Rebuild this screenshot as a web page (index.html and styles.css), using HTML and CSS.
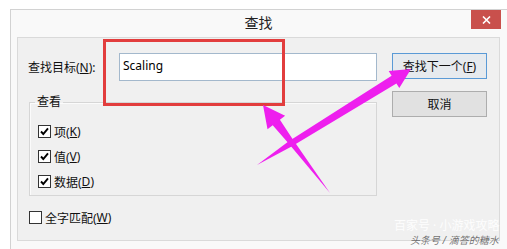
FILE: index.html
```html
<!DOCTYPE html>
<html lang="zh">
<head>
<meta charset="utf-8">
<title>查找</title>
<link rel="stylesheet" href="styles.css">
</head>
<body>
<div class="window">
  <div class="titlebar">
    <span></span>
    <span class="title">查找</span>
    <div class="close"><svg width="9" height="8" viewBox="0 0 9 8"><path d="M1 0.5 L8 7.5 M8 0.5 L1 7.5" stroke="#fff" stroke-width="1.6" fill="none"/></svg></div>
  </div>
  <div class="panel">
    <div class="main">
      <div class="find-row">
        <span class="find-label">查找目标(<u>N</u>):</span>
        <div class="input">Scaling</div>
      </div>
      <fieldset class="look">
        <legend>查看</legend>
        <div class="checks">
          <div class="check"><span class="box"><svg width="11" height="11" viewBox="0 0 11 11"><path d="M2 5.5 L4.3 8 L9 2.3" stroke="#000" stroke-width="1.9" fill="none"/></svg></span>项(<u>K</u>)</div>
          <div class="check"><span class="box"><svg width="11" height="11" viewBox="0 0 11 11"><path d="M2 5.5 L4.3 8 L9 2.3" stroke="#000" stroke-width="1.9" fill="none"/></svg></span>值(<u>V</u>)</div>
          <div class="check"><span class="box"><svg width="11" height="11" viewBox="0 0 11 11"><path d="M2 5.5 L4.3 8 L9 2.3" stroke="#000" stroke-width="1.9" fill="none"/></svg></span>数据(<u>D</u>)</div>
        </div>
      </fieldset>
      <div class="check whole"><span class="box"></span>全字匹配(<u>W</u>)</div>
    </div>
    <div class="buttons">
      <div class="btn default">查找下一个(<u>F</u>)</div>
      <div class="btn">取消</div>
    </div>
  </div>
</div>
<div class="highlight"></div>
<svg class="arrows" width="507" height="249" viewBox="0 0 507 249">
  <polygon fill="#ee1fee" points="257,165 291.6,146.5 396.4,83.4 399.3,88.1 411,69 388.7,71.1 391.6,75.8 288.4,141.5"/>
  <polygon fill="#ee1fee" points="330,193 292.4,138.7 279.9,119.8 285.1,115.8 263,105 267.5,129.2 272.7,125.2 287.6,142.3"/>
</svg>
<div class="wm-faint">百家号 · 小游戏攻略</div>
<div class="watermark">头条号 / 滴答的糖水</div>
</body>
</html>
```
FILE: styles.css
```css
html, body {
  margin: 0;
  padding: 0;
}
body {
  position: relative;
  width: 507px;
  height: 249px;
  overflow: hidden;
  background: #ffffff;
  font-family: "Noto Sans", "Noto Sans CJK SC", sans-serif;
  font-size: 12px;
  color: #111;
}
.window {
  margin: 9px 0 0 10px;
  width: 497px;
  height: 240px;
  box-sizing: border-box;
  border-top: 1px solid #d2d2d2;
  border-left: 1px solid #d2d2d2;
  background: #f9f9f9;
  padding: 0 7px 0 6px;
}
.titlebar {
  display: grid;
  grid-template-columns: 1fr auto 1fr;
  height: 27px;
}
.title {
  font-size: 14px;
  line-height: 20px;
  padding-top: 3px;
  color: #222;
}
.close {
  justify-self: end;
  align-self: start;
  margin-right: -1px;
  width: 30px;
  height: 19px;
  background: #c9504c;
  display: flex;
  align-items: center;
  justify-content: center;
}
.close svg { display: block; }
.panel {
  height: 204px;
  box-sizing: border-box;
  border: 1px solid #dadada;
  background: #f0f0f0;
  display: flex;
  padding: 15px 0 0 11px;
}
.main {
  width: 348px;
}
.find-row {
  display: flex;
  align-items: center;
  height: 28px;
}
.find-label {
  margin-left: -1px;
  width: 91px;
}
.input {
  width: 258px;
  height: 28px;
  box-sizing: border-box;
  border: 1px solid #a3b8cc;
  background: #ffffff;
  padding-left: 3px;
  line-height: 23px;
  color: #000;
}
u {
  text-decoration: underline;
  text-underline-offset: 1px;
}
.look {
  margin: 12px 0 0 0;
  padding: 0 0 1px 8px;
  border: 1px solid #d6d6d6;
  box-shadow: inset 1px 1px 0 #fbfbfb;
  min-width: 0;
  width: 348px;
  height: 103px;
  box-sizing: border-box;
}
.look legend {
  padding: 0 2px;
  margin-left: -3px;
  line-height: 18px;
}
.checks {
  padding-top: 8px;
}
.check {
  display: flex;
  align-items: center;
  height: 25px;
}
.box {
  width: 13px;
  height: 13px;
  box-sizing: border-box;
  border: 1px solid #333;
  background: #ffffff;
  margin-right: 3px;
  flex: none;
}
.box svg { display: block; }
.whole {
  margin-top: 9px;
}
.buttons {
  margin-left: 15px;
  width: 95px;
  display: flex;
  flex-direction: column;
  gap: 12px;
}
.btn {
  height: 26px;
  box-sizing: border-box;
  border: 1px solid #adadad;
  background: #e1e1e1;
  display: flex;
  align-items: center;
  justify-content: center;
}
.btn.default {
  border-color: #5a9ad6;
  background: #e6eaee;
}
.highlight {
  position: absolute;
  left: 103px;
  top: 39px;
  width: 182px;
  height: 67px;
  box-sizing: border-box;
  border: 3px solid #e23d3d;
}
.arrows {
  position: absolute;
  left: 0;
  top: 0;
  pointer-events: none;
}
.wm-faint {
  position: absolute;
  left: 394px;
  top: 218px;
  font-size: 12px;
  line-height: 15px;
  color: rgba(255, 255, 255, 0.9);
  white-space: nowrap;
}
.watermark {
  position: absolute;
  left: 410px;
  top: 234px;
  font-size: 10px;
  line-height: 13px;
  color: rgba(70, 70, 70, 0.75);
  font-style: italic;
  white-space: nowrap;
}
```
